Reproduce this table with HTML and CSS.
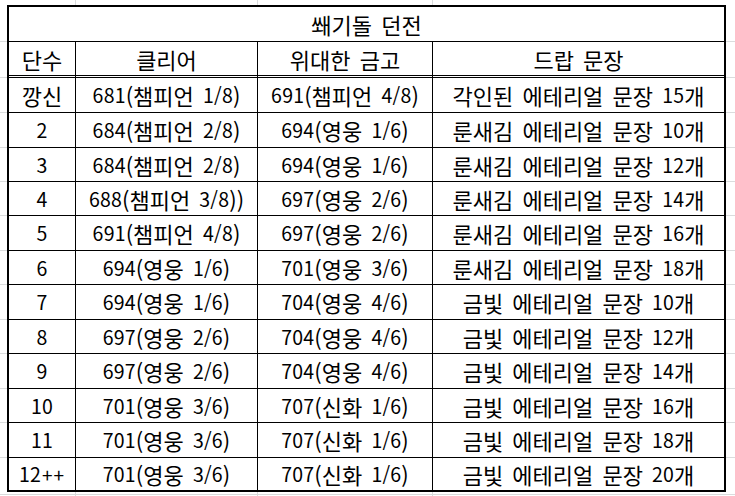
FILE: index.html
```html
<!DOCTYPE html>
<html lang="ko">
<head>
<meta charset="utf-8">
<title>쐐기돌 던전</title>
<link rel="stylesheet" href="styles.css">
</head>
<body>
<div class="sheet">
  <div class="table">
    <div class="cell title">쐐기돌 던전</div>
    <div class="cell head">단수</div><div class="cell head">클리어</div><div class="cell head">위대한 금고</div><div class="cell head last">드랍 문장</div>

    <div class="cell">깡신</div><div class="cell"><span class="n">681</span>(챔피언 <span class="n">1/8</span>)</div><div class="cell"><span class="n">691</span>(챔피언 <span class="n">4/8</span>)</div><div class="cell last">각인된 에테리얼 문장 <span class="n">15</span>개</div>
    <div class="cell"><span class="n">2</span></div><div class="cell"><span class="n">684</span>(챔피언 <span class="n">2/8</span>)</div><div class="cell"><span class="n">694</span>(영웅 <span class="n">1/6</span>)</div><div class="cell last">룬새김 에테리얼 문장 <span class="n">10</span>개</div>
    <div class="cell"><span class="n">3</span></div><div class="cell"><span class="n">684</span>(챔피언 <span class="n">2/8</span>)</div><div class="cell"><span class="n">694</span>(영웅 <span class="n">1/6</span>)</div><div class="cell last">룬새김 에테리얼 문장 <span class="n">12</span>개</div>
    <div class="cell"><span class="n">4</span></div><div class="cell"><span class="n">688</span>(챔피언 <span class="n">3/8</span>))</div><div class="cell"><span class="n">697</span>(영웅 <span class="n">2/6</span>)</div><div class="cell last">룬새김 에테리얼 문장 <span class="n">14</span>개</div>
    <div class="cell"><span class="n">5</span></div><div class="cell"><span class="n">691</span>(챔피언 <span class="n">4/8</span>)</div><div class="cell"><span class="n">697</span>(영웅 <span class="n">2/6</span>)</div><div class="cell last">룬새김 에테리얼 문장 <span class="n">16</span>개</div>
    <div class="cell"><span class="n">6</span></div><div class="cell"><span class="n">694</span>(영웅 <span class="n">1/6</span>)</div><div class="cell"><span class="n">701</span>(영웅 <span class="n">3/6</span>)</div><div class="cell last">룬새김 에테리얼 문장 <span class="n">18</span>개</div>
    <div class="cell"><span class="n">7</span></div><div class="cell"><span class="n">694</span>(영웅 <span class="n">1/6</span>)</div><div class="cell"><span class="n">704</span>(영웅 <span class="n">4/6</span>)</div><div class="cell last">금빛 에테리얼 문장 <span class="n">10</span>개</div>
    <div class="cell"><span class="n">8</span></div><div class="cell"><span class="n">697</span>(영웅 <span class="n">2/6</span>)</div><div class="cell"><span class="n">704</span>(영웅 <span class="n">4/6</span>)</div><div class="cell last">금빛 에테리얼 문장 <span class="n">12</span>개</div>
    <div class="cell"><span class="n">9</span></div><div class="cell"><span class="n">697</span>(영웅 <span class="n">2/6</span>)</div><div class="cell"><span class="n">704</span>(영웅 <span class="n">4/6</span>)</div><div class="cell last">금빛 에테리얼 문장 <span class="n">14</span>개</div>
    <div class="cell"><span class="n">10</span></div><div class="cell"><span class="n">701</span>(영웅 <span class="n">3/6</span>)</div><div class="cell"><span class="n">707</span>(신화 <span class="n">1/6</span>)</div><div class="cell last">금빛 에테리얼 문장 <span class="n">16</span>개</div>
    <div class="cell"><span class="n">11</span></div><div class="cell"><span class="n">701</span>(영웅 <span class="n">3/6</span>)</div><div class="cell"><span class="n">707</span>(신화 <span class="n">1/6</span>)</div><div class="cell last">금빛 에테리얼 문장 <span class="n">18</span>개</div>
    <div class="cell bottom"><span class="n">12</span><span class="plus">++</span></div><div class="cell bottom"><span class="n">701</span>(영웅 <span class="n">3/6</span>)</div><div class="cell bottom"><span class="n">707</span>(신화 <span class="n">1/6</span>)</div><div class="cell bottom last">금빛 에테리얼 문장 <span class="n">20</span>개</div>
  </div>
</div>
</body>
</html>
```

FILE: styles.css
```css
html, body {
  margin: 0;
  padding: 0;
  background: #fff;
}

.sheet {
  box-sizing: border-box;
  width: 735px;
  height: 496px;
  padding: 5px 0 0 7px;
  background-color: #fff;
  background-image:
    linear-gradient(to right,
      transparent 75px, #dadcdd 75px, #dadcdd 76px, transparent 76px,
      transparent 257px, #dadcdd 257px, #dadcdd 258px, transparent 258px,
      transparent 432px, #dadcdd 432px, #dadcdd 433px, transparent 433px),
    linear-gradient(to bottom,
      transparent 41px, #dadcdd 41px, #dadcdd 42px, transparent 42px,
      transparent 77px, #dadcdd 77px, #dadcdd 78px, transparent 78px,
      transparent 112px, #dadcdd 112px, #dadcdd 113px, transparent 113px,
      transparent 147px, #dadcdd 147px, #dadcdd 148px, transparent 148px,
      transparent 181px, #dadcdd 181px, #dadcdd 182px, transparent 182px,
      transparent 215px, #dadcdd 215px, #dadcdd 216px, transparent 216px,
      transparent 250px, #dadcdd 250px, #dadcdd 251px, transparent 251px,
      transparent 284px, #dadcdd 284px, #dadcdd 285px, transparent 285px,
      transparent 319px, #dadcdd 319px, #dadcdd 320px, transparent 320px,
      transparent 353px, #dadcdd 353px, #dadcdd 354px, transparent 354px,
      transparent 388px, #dadcdd 388px, #dadcdd 389px, transparent 389px,
      transparent 422px, #dadcdd 422px, #dadcdd 423px, transparent 423px,
      transparent 457px, #dadcdd 457px, #dadcdd 458px, transparent 458px,
      transparent 494px, #dadcdd 494px, #dadcdd 495px, transparent 495px);
}

.table {
  display: grid;
  width: 719px;
  box-sizing: border-box;
  border: 2px solid #000;
  background: #fff;
  grid-template-columns: 67px 182px 175px 291px;
  grid-template-rows: 35px 36px 35px 35px 34px 34px 35px 34px 35px 34px 35px 34px 35px 32px;
  font-family: "Noto Sans CJK KR", "Liberation Sans", sans-serif;
  font-size: 22px;
  letter-spacing: 0;
  word-spacing: 3px;
  color: #000;
}

.cell {
  box-sizing: border-box;
  display: flex;
  align-items: center;
  justify-content: center;
  white-space: pre;
  border-right: 1px solid #000;
  border-bottom: 1px solid #000;
  line-height: 1;
}

.n {
  font-size: 19.5px;
  letter-spacing: 0.2px;
}

.plus {
  font-size: 19px;
  letter-spacing: 1px;
  margin-left: 1px;
}

.cell.last {
  border-right: none;
}

.cell.bottom {
  border-bottom: none;
}

.title {
  grid-column: 1 / -1;
  border-right: none;
}

.head {
  border-bottom: 3px double #000;
}
```
